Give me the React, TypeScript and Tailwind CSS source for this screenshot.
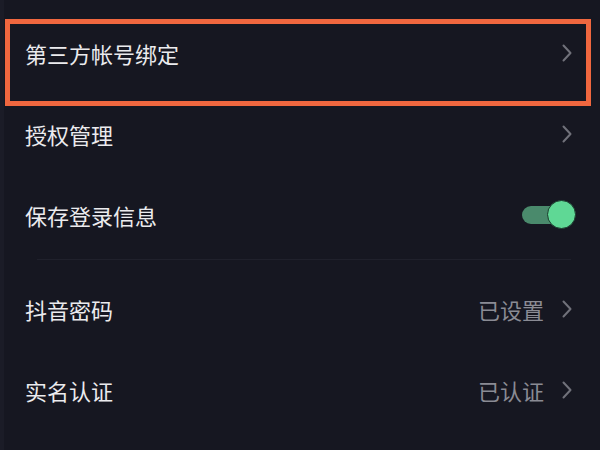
import React from "react";

const Chevron = () => (
  <svg width="12" height="18" viewBox="0 0 12 18" className="shrink-0">
    <path d="M2.5 1.5 L9.5 9 L2.5 16.5" fill="none" stroke="#70717a" strokeWidth="2" strokeLinecap="round" strokeLinejoin="round" />
  </svg>
);

const Row = ({ label, right }: { label: string; right?: React.ReactNode }) => (
  <div className="flex h-[81px] items-center justify-between pl-[21px] pr-[27px]">
    <span className="text-[22px] leading-none text-[#ebebee]">{label}</span>
    {right}
  </div>
);

const Toggle = () => (
  <div className="mr-[-3px] flex items-center">
    <div className="mr-[-25px] h-[18px] w-[50px] rounded-full bg-[#4a8a6c]" />
    <div className="relative h-[29px] w-[29px] rounded-full border border-[#1b3a2c] bg-[#5fd895]" />
  </div>
);

const Value = ({ text }: { text: string }) => (
  <div className="flex items-center gap-[17px]">
    <span className="text-[22px] leading-none text-[#8a8b94]">{text}</span>
    <Chevron />
  </div>
);

export default function App() {
  return (
    <div
      className="relative h-[450px] w-[600px] overflow-hidden border-l-[4px] border-[#1b1c27] bg-[#161721] pt-[12px]"
      style={{ fontFamily: '"Noto Sans CJK SC", "Noto Sans", sans-serif' }}
    >
      <Row label="第三方帐号绑定" right={<Chevron />} />
      <Row label="授权管理" right={<Chevron />} />
      <Row label="保存登录信息" right={<Toggle />} />
      <div className="ml-[33px] mr-[29px] mt-[4px] h-[1px] bg-[#20212c]" />
      <div className="mt-[8px]">
        <Row label="抖音密码" right={<Value text="已设置" />} />
        <Row label="实名认证" right={<Value text="已认证" />} />
      </div>
      <div className="pointer-events-none absolute left-[1px] top-[19px] h-[87px] w-[586px] border-[5px] border-[#f0673f]" />
    </div>
  );
}
